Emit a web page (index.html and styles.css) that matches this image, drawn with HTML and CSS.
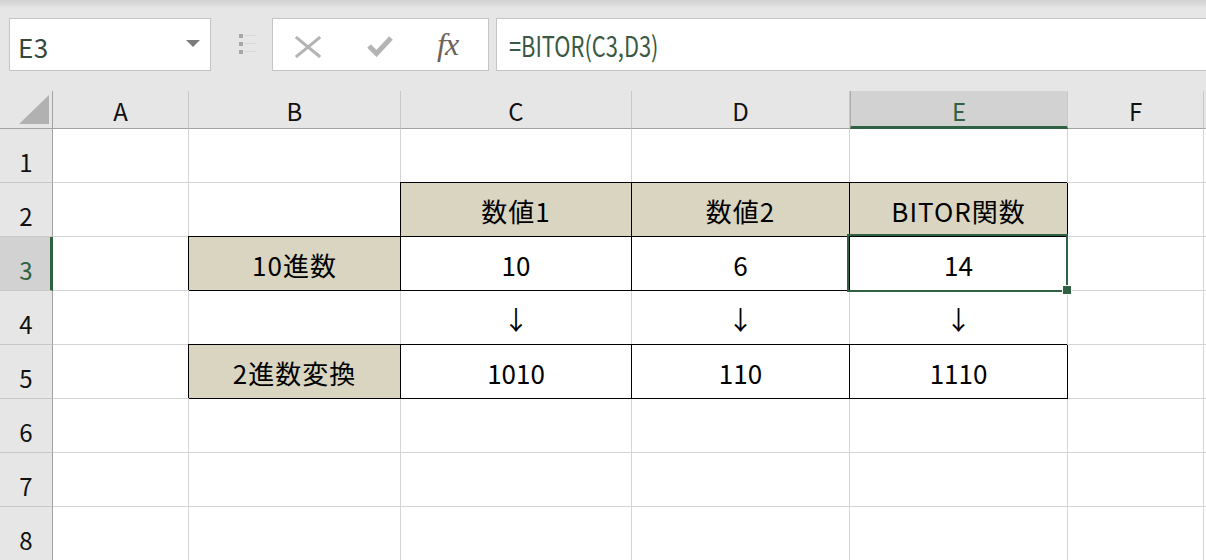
FILE: index.html
```html
<!DOCTYPE html>
<html lang="ja">
<head>
<meta charset="utf-8">
<title>BITOR</title>
<link rel="stylesheet" href="styles.css">
</head>
<body>
<div class="app">
  <div class="toolbar">
    <div class="namebox">
      <span class="name">E3</span>
      <span class="caret"></span>
    </div>
    <div class="grip"><i></i><i></i><i></i></div>
    <div class="fxbtns">
      <svg class="ico ico-x" width="26" height="22" viewBox="0 0 26 22">
        <path d="M2 2 L24 20 M24 2 L2 20" stroke="#b4b4b4" stroke-width="3" fill="none" stroke-linecap="square"/>
      </svg>
      <svg class="ico ico-ok" width="26" height="22" viewBox="0 0 26 22">
        <path d="M2 11 L9.5 18.5 L24 3" stroke="#b4b4b4" stroke-width="5" fill="none"/>
      </svg>
      <span class="fx">fx</span>
    </div>
    <div class="formula"><span class="ftext">=BITOR(C3,D3)</span></div>
  </div>

  <div class="sheet">
    <div class="corner">
      <svg width="53" height="38" viewBox="0 0 53 38"><polygon points="19,33 49,33 49,4" fill="#b1b1b1"/></svg>
    </div>
    <div class="ch">A</div>
    <div class="ch">B</div>
    <div class="ch">C</div>
    <div class="ch">D</div>
    <div class="ch sel">E</div>
    <div class="ch">F</div>
    <div class="ch end"></div>

    <div class="rh">1</div>
    <div class="c"></div><div class="c"></div><div class="c"></div><div class="c"></div><div class="c"></div><div class="c"></div><div class="c end"></div>

    <div class="rh">2</div>
    <div class="c"></div><div class="c"></div>
    <div class="c t hd">数値1</div>
    <div class="c t hd">数値2</div>
    <div class="c t hd">BITOR関数</div>
    <div class="c"></div><div class="c end"></div>

    <div class="rh sel">3</div>
    <div class="c"></div>
    <div class="c t hd">10進数</div>
    <div class="c t">10</div>
    <div class="c t">6</div>
    <div class="c t">14</div>
    <div class="c"></div><div class="c end"></div>

    <div class="rh">4</div>
    <div class="c"></div><div class="c"></div>
    <div class="c arrow">↓</div>
    <div class="c arrow">↓</div>
    <div class="c arrow">↓</div>
    <div class="c"></div><div class="c end"></div>

    <div class="rh">5</div>
    <div class="c"></div>
    <div class="c t hd">2進数変換</div>
    <div class="c t">1010</div>
    <div class="c t">110</div>
    <div class="c t">1110</div>
    <div class="c"></div><div class="c end"></div>

    <div class="rh">6</div>
    <div class="c"></div><div class="c"></div><div class="c"></div><div class="c"></div><div class="c"></div><div class="c"></div><div class="c end"></div>

    <div class="rh">7</div>
    <div class="c"></div><div class="c"></div><div class="c"></div><div class="c"></div><div class="c"></div><div class="c"></div><div class="c end"></div>

    <div class="rh">8</div>
    <div class="c"></div><div class="c"></div><div class="c"></div><div class="c"></div><div class="c"></div><div class="c"></div><div class="c end"></div>

    <div class="selection"></div>
    <div class="handle"></div>
  </div>
</div>
</body>
</html>
```

FILE: styles.css
```css
html, body {
  margin: 0;
  padding: 0;
  width: 1206px;
  height: 560px;
  overflow: hidden;
  background: #ffffff;
}

.app {
  width: 1206px;
  height: 560px;
  overflow: hidden;
  font-family: "Noto Sans CJK JP", "Noto Sans", sans-serif;
}

/* ---------- formula bar strip ---------- */
.toolbar {
  height: 91px;
  box-sizing: border-box;
  padding-top: 18px;
  display: flex;
  align-items: flex-start;
  background: linear-gradient(#d2d2d2 0px, #dcdcdc 5px, #e6e6e6 8px, #e6e6e6 100%);
}

.namebox {
  margin-left: 9px;
  width: 202px;
  height: 53px;
  box-sizing: border-box;
  border: 1px solid #c4c4c4;
  background: #ffffff;
  display: flex;
  align-items: center;
  justify-content: space-between;
  padding: 4px 10px 0 8px;
}

.name {
  font-size: 26px;
  color: #34483b;
  letter-spacing: 0.5px;
}

.caret {
  width: 0;
  height: 0;
  border-left: 7px solid transparent;
  border-right: 7px solid transparent;
  border-top: 7px solid #7b7b7b;
  margin-top: -6px;
}

.grip {
  margin-left: 28px;
  margin-top: 16px;
  width: 17px;
  display: flex;
  flex-direction: column;
  gap: 4px;
}

/* dot plus faint rule to its right */
.grip i {
  display: block;
  height: 4px;
  background:
    linear-gradient(#d9d9d9, #d9d9d9) 6px 1px / 11px 1px no-repeat,
    linear-gradient(#a6a6a6, #a6a6a6) 0 0 / 4px 4px no-repeat;
}

.fxbtns {
  margin-left: 16px;
  width: 217px;
  height: 53px;
  box-sizing: border-box;
  border: 1px solid #c4c4c4;
  background: #ffffff;
  display: flex;
  align-items: center;
  padding-left: 22px;
}

.ico {
  display: block;
}

.ico-x {
  margin-top: 4px;
}

.ico-ok {
  margin-left: 46px;
  margin-top: 2px;
}

.fx {
  margin-left: 44px;
  font-family: "Liberation Serif", "DejaVu Serif", serif;
  font-style: italic;
  font-size: 32px;
  color: #6c625a;
  letter-spacing: -1px;
  margin-top: 0;
}

.formula {
  margin-left: 7px;
  flex: 1;
  height: 53px;
  box-sizing: border-box;
  border: 1px solid #c4c4c4;
  border-right: none;
  background: #ffffff;
  display: flex;
  align-items: center;
  padding-left: 12px;
  padding-top: 1px;
}

.ftext {
  display: inline-block;
  font-size: 28px;
  color: #3a5843;
  transform: scaleX(0.78);
  transform-origin: left center;
  white-space: nowrap;
}

/* ---------- sheet grid ---------- */
.sheet {
  position: relative;
  display: grid;
  grid-template-columns: 53px 136px 212px 231px 218px 218px 136px 2px;
  grid-template-rows: 38px repeat(8, 54px);
  font-size: 26px;
  color: #000000;
}

.sheet > div {
  box-sizing: border-box;
}

.corner {
  background: #e6e6e6;
  border-right: 1px solid #a3a3a3;
  border-bottom: 1px solid #a3a3a3;
}

.corner svg {
  display: block;
}

.ch {
  background: #e6e6e6;
  border-right: 1px solid #c8c8c8;
  border-bottom: 1px solid #a3a3a3;
  display: flex;
  align-items: center;
  justify-content: center;
  font-size: 24px;
  color: #111111;
  padding-top: 1px;
}

.ch.sel {
  background: #d2d2d2;
  border-bottom: 3px solid #2e6243;
  border-left: 1px solid #ababab;
  color: #2e6243;
  padding-top: 3px;
}

.ch.end {
  border-right: none;
}

.rh {
  background: #e6e6e6;
  border-right: 1px solid #a3a3a3;
  border-bottom: 1px solid #c8c8c8;
  display: flex;
  align-items: flex-end;
  justify-content: center;
  font-size: 24px;
  color: #111111;
  line-height: 1;
  padding-bottom: 8px;
}

.rh.sel {
  background: #d2d2d2;
  border-right: 3px solid #2e6243;
  color: #2e6243;
  padding-left: 2px;
}

.c {
  background: #ffffff;
  border-right: 1px solid #d4d4d4;
  border-bottom: 1px solid #d4d4d4;
  display: flex;
  align-items: center;
  justify-content: center;
  padding-top: 2px;
  white-space: nowrap;
}

.c.end {
  border-right: none;
}

/* bordered table cells */
.c.t {
  border-right: 1px solid #000000;
  border-bottom: 1px solid #000000;
  box-shadow: -1px -1px 0 0 #000000;
}

.c.hd {
  background: #d9d5c0;
  letter-spacing: 1px;
}

.c.arrow {
  font-size: 26px;
}

/* active cell outline */
.selection {
  position: absolute;
  left: 847px;
  top: 143px;
  width: 221px;
  height: 58px;
  border: 2px solid #2e6243;
  box-sizing: border-box;
  pointer-events: none;
}

.handle {
  position: absolute;
  left: 1062px;
  top: 194px;
  width: 10px;
  height: 10px;
  box-sizing: border-box;
  background: #2e6243;
  border: 1px solid #ffffff;
}
```
